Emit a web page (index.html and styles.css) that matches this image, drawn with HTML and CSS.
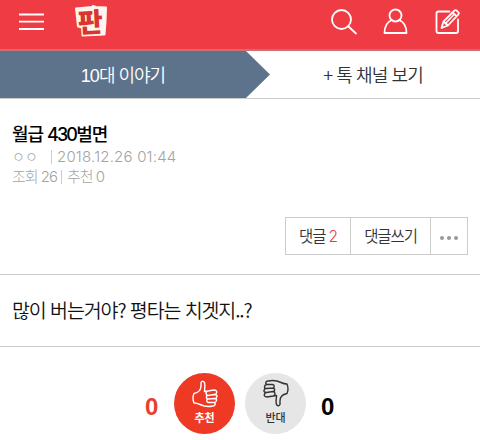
FILE: index.html
```
<!DOCTYPE html>
<html lang="ko">
<head>
    <meta charset="UTF-8">
    <meta name="viewport" content="width=device-width, initial-scale=1.0">
    <title>판</title>
    <link rel="stylesheet" href="styles.css">
</head>
<body>
    <header class="header">
        <svg class="icon-menu" width="26" height="20" viewBox="0 0 26 20">
            <path d="M1 2.500h25M1 9.700h25M1 17h25"/>
        </svg>
        <div class="logo">
            <svg width="36" height="36" viewBox="0 0 36 36">
                <path d="M3 5.500L19 4l1-1 3 1 10 .500-.5 14-1 13-22 1-.5-8-4-1z"/>
            </svg>
            <span>판</span>
        </div>
        <div class="header-icons">
            <svg width="27" height="28" viewBox="0 0 27 28">
                <circle cx="10.500" cy="11.500" r="9.500"/>
                <path d="M17.500 18.500l7.500 7"/>
            </svg>
            <svg width="26" height="28" viewBox="0 0 26 28">
                <circle cx="12.500" cy="7.500" r="6"/>
                <path d="M8.800 12C4 14 1.500 18 1.500 25h22c0-7-2.500-11-7.300-13"/>
            </svg>
            <svg width="28" height="28" viewBox="0 0 28 28">
                <path d="M15.500 3.500H4.500q-2 0-2 2v17.500q0 2 2 2h17.500q2 0 2-2V11.500"/>
                <path d="M7.500 20l2-6.500L20.500 2.500q1-.8 2 0l2 1.900q.8 1-.1 1.900L14 17.500zM18.500 4.500l4 3.700M9.500 13.500l4.500 4M11.500 15.500l8.500-9"/>
            </svg>
        </div>
    </header>

    <nav class="tabs">
        <div class="tab tab-current"><span><b>10</b>대 이야기</span></div>
        <div class="tab tab-channel"><span>+ 톡 채널 보기</span></div>
    </nav>

    <section class="post-head">
        <h1>월급 <b>430</b>벌면</h1>
        <p class="meta"><span class="writer">ㅇㅇ</span><i></i><span class="date">2018.12.26 01:44</span></p>
        <p class="meta"><span class="views">조회 26</span><i></i><span class="likes">추천 0</span></p>
        <div class="post-buttons">
            <a class="btn-count"><span>댓글 <em>2</em></span></a>
            <a class="btn-write"><span>댓글쓰기</span></a>
            <a class="btn-more"><b></b><b></b><b></b></a>
        </div>
    </section>

    <section class="post-body">
        <p>많이 버는거야? 평타는 치겟지..?</p>
    </section>

    <section class="vote">
        <span class="num num-up">0</span>
        <div class="circle circle-up">
            <svg width="28" height="30" viewBox="0 0 28 30">
                <path d="M3 14.500C8 13.500 10 10 10 7V3.500Q11.500 1 13.500 3.500C14.500 7 13.500 9 13.500 12.500L23 11q3 .3 2.700 2.300T23.500 15.500L17 16.500M23.500 15.500q2.800.2 2.500 2.200T23.500 19.500L17 20M23.500 19.500q2.200.2 2 2T23 23.500L17.500 23.500M23 23.500q1.500.4 1.200 1.900T22 27C15 28.500 12 27 9 25.500Q6 24 3 24Q1 19 3 14.500M17 16.500q-2-.3-2-2t1.500-2.400M17 20q-1.700-.3-1.700-1.800T17 16.500M17.500 23.500q-1.700-.3-1.700-1.800T17 20"/>
            </svg>
            <span>추천</span>
        </div>
        <div class="circle circle-down">
            <svg width="28" height="30" viewBox="0 0 28 30">
                <path transform="rotate(180 14 14.500)" d="M3 14.500C8 13.500 10 10 10 7V3.500Q11.500 1 13.500 3.500C14.500 7 13.500 9 13.500 12.500L23 11q3 .3 2.700 2.300T23.500 15.500L17 16.500M23.500 15.500q2.800.2 2.500 2.200T23.500 19.500L17 20M23.500 19.500q2.200.2 2 2T23 23.500L17.500 23.500M23 23.500q1.500.4 1.200 1.900T22 27C15 28.500 12 27 9 25.500Q6 24 3 24Q1 19 3 14.500M17 16.500q-2-.3-2-2t1.500-2.400M17 20q-1.700-.3-1.700-1.800T17 16.500M17.500 23.500q-1.700-.3-1.700-1.800T17 20"/>
            </svg>
            <span>반대</span>
        </div>
        <span class="num num-down">0</span>
    </section>
</body>
</html>
```

FILE: styles.css
```
* {
    box-sizing: border-box;
}
body {
    margin: 0;
    background-color: #fff;
    font-family: Inter, "Noto Sans CJK KR", sans-serif;
    color: #333;
    overflow: hidden;
}
h1, p {
    margin: 0;
    white-space: nowrap;
}
em, i {
    font-style: normal;
}
svg {
    display: block;
    fill: none;
    stroke-linecap: round;
    stroke-linejoin: round;
}

/* header */
.header {
    display: flex;
    align-items: flex-start;
    height: 51px;
    padding: 3px 18px 0;
    background-color: #ef3b43;
    border-bottom: 2px solid #c87078;
}
.icon-menu {
    margin-top: 9px;
    stroke: #fff;
    stroke-width: 1.8;
    stroke-linecap: butt;
}
.logo {
    position: relative;
    width: 36px;
    height: 36px;
    margin-left: 29px;
}
.logo path {
    fill: #fff4ee;
    stroke: #fff4ee;
    stroke-width: 2;
}
.logo span {
    position: absolute;
    top: 0;
    left: 5px;
    font-family: "Noto Sans CJK KR", sans-serif;
    font-size: 27px;
    font-weight: 900;
    line-height: 35px;
    color: #d9352d;
    transform: rotate(-3deg);
}
.header-icons {
    display: flex;
    gap: 25px;
    margin: 5px 0 0 auto;
}
.header-icons svg {
    stroke: #fff;
    stroke-width: 1.8;
}

/* tabs */
.tabs {
    display: flex;
    height: 48px;
    border-bottom: 1px solid #ccc;
}
.tab {
    display: flex;
    align-items: center;
    justify-content: center;
    font-size: 18px;
    font-weight: 350;
    font-family: "Noto Sans CJK KR", sans-serif;
}
.tab span {
    margin-top: -2px;
}
.tab b {
    font-family: "Liberation Sans", sans-serif;
    font-weight: 400;
    letter-spacing: -1px;
}
.tab-current {
    width: 270px;
    padding-right: 24px;
    color: #fff;
    letter-spacing: -1px;
    background-color: #5d738c;
    clip-path: polygon(0 0, 246px 0, 100% 50%, 246px 100%, 0 100%);
}
.tab-channel {
    flex: 1;
    padding-right: 4px;
    letter-spacing: -0.9px;
}

/* post title */
.post-head {
    height: 176px;
    padding: 22px 12px 0;
    border-bottom: 1px solid #ccc;
}
.post-head h1 {
    font-family: "Noto Sans CJK KR", sans-serif;
    font-size: 18px;
    font-weight: 500;
    line-height: 24px;
    letter-spacing: -1.1px;
    color: #000;
}
.post-head h1 b {
    font-family: Inter, sans-serif;
    font-weight: 500;
    letter-spacing: -1.8px;
}
.meta {
    display: flex;
    align-items: center;
    height: 20px;
    font-size: 15px;
    font-weight: 300;
    line-height: 20px;
    color: #a3a3a3;
}
.meta i {
    width: 1px;
    height: 14px;
    background-color: #ccc;
}
.writer {
    width: 39px;
    font-size: 14px;
}
.date {
    margin-left: 5px;
    letter-spacing: 0.2px;
}
.views {
    width: 49px;
    letter-spacing: -1px;
}
.likes {
    margin-left: 5px;
    letter-spacing: -1px;
}
.post-buttons {
    display: flex;
    width: 183px;
    height: 38px;
    margin: 30px 0 0 auto;
    border: 1px solid #ccc;
}
.post-buttons a {
    display: flex;
    align-items: center;
    justify-content: center;
    font-family: "Noto Sans CJK KR", sans-serif;
    font-size: 15.5px;
    font-weight: 350;
    letter-spacing: -1.1px;
}
.post-buttons span {
    margin-top: -3px;
}
.post-buttons a + a {
    border-left: 1px solid #ccc;
}
.post-buttons em {
    font-family: Inter, sans-serif;
    font-weight: 300;
    color: #e0403f;
}
.btn-count {
    width: 64px;
}
.btn-write {
    width: 80px;
}
.post-buttons .btn-more {
    flex: 1;
    gap: 3px;
    padding-top: 4px;
}
.btn-more b {
    width: 4px;
    height: 4px;
    border-radius: 50%;
    background-color: #999;
}

/* post text */
.post-body {
    display: flex;
    align-items: center;
    height: 72px;
    padding: 0 12px;
    border-bottom: 1px solid #ccc;
}
.post-body p {
    margin-top: -2px;
    font-family: "Noto Sans CJK KR", sans-serif;
    font-size: 19.5px;
    font-weight: 350;
    letter-spacing: -1.1px;
    color: #111;
}

/* vote */
.vote {
    display: flex;
    align-items: center;
    padding: 26px 0 0 145px;
}
.num {
    padding-top: 6px;
    font-family: "Liberation Sans", sans-serif;
    font-size: 24px;
    font-weight: 700;
    line-height: 26px;
}
.num-up {
    width: 29px;
    color: #e8402f;
}
.num-down {
    margin-left: 15px;
    color: #000;
}
.circle {
    display: flex;
    flex-direction: column;
    align-items: center;
    width: 61px;
    height: 61px;
    padding-top: 6px;
    border-radius: 50%;
    font-family: "Noto Sans CJK KR", sans-serif;
    font-size: 11px;
    line-height: 16px;
}
.circle svg {
    stroke-width: 1.4;
}
.circle-up {
    background-color: #ee3a24;
    color: #fff;
    font-weight: 700;
}
.circle-up svg {
    stroke: #fff;
}
.circle-down {
    margin-left: 10px;
    background-color: #e6e6e6;
    font-weight: 500;
}
.circle-down svg {
    stroke: #333;
}
```
